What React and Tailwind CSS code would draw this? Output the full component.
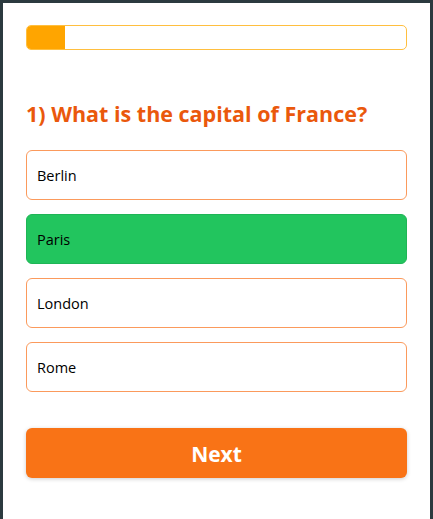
export default function App() {
  const options = ["Berlin", "Paris", "London", "Rome"];
  return (
    <div className="w-[433px] h-[519px] bg-[#2b3a3f] pt-[3px] px-[3px] overflow-hidden" style={{ fontFamily: '"Open Sans", "Noto Sans", sans-serif' }}>
      <div className="bg-white h-[520px] pt-[22px] px-[23px]">
        <div className="h-[25px] rounded-[5px] border border-[#ffbf3f] overflow-hidden">
          <div className="h-full w-[10%] bg-[#ffa500]" />
        </div>
        <h2 className="mt-[49px] text-[21.5px] leading-[30px] font-bold text-[#ea580c]">
          1) What is the capital of France?
        </h2>
        <div className="mt-[21px] flex flex-col gap-[14px]">
          {options.map((o) => (
            <div
              key={o}
              className={
                o === "Paris"
                  ? "h-[50px] rounded-[6px] border border-[#1fb556] bg-[#22c55e] flex items-center px-[10px] pt-[2px] text-[14.5px] text-black"
                  : "h-[50px] rounded-[6px] border border-[#fb9a5c] bg-white flex items-center px-[10px] pt-[2px] text-[14.5px] text-black"
              }
            >
              {o}
            </div>
          ))}
        </div>
        <button className="mt-[36px] w-full h-[50px] pt-[4px] rounded-[6px] bg-[#f97316] text-white font-bold text-[21px] shadow-[0_1px_4px_rgba(0,0,0,0.2)]">
          Next
        </button>
      </div>
    </div>
  );
}
